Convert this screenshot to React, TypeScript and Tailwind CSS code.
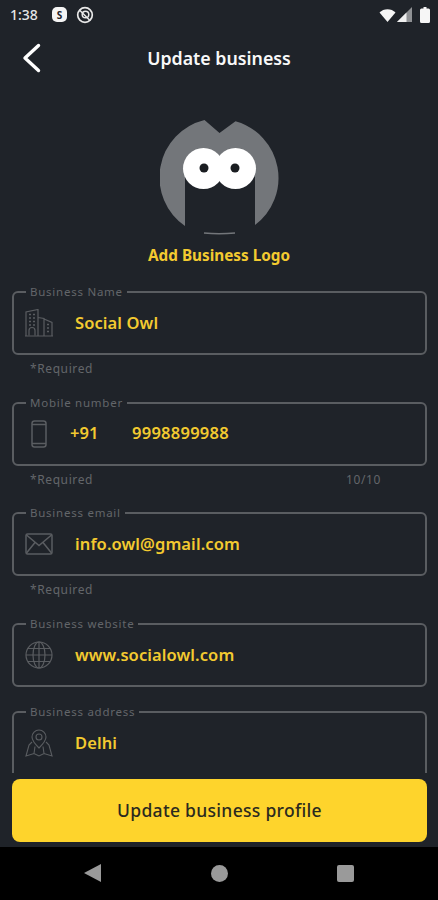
import React from "react";

const font = { fontFamily: '"Noto Sans", sans-serif' };

function Building() {
  return (
    <svg width="30" height="28" viewBox="0 0 30 28" fill="none" stroke="#5a5d61" strokeWidth="1.2">
      <path d="M1 27h28M2 26.500V3l12-2.500V26.500M14 8.500l6 1V26.500M20 10l8 3.500v13" />
      <path d="M5 5.500h2M9 5.500h2M5 9h2M9 9h2M5 12.500h2M9 12.500h2M5 16h2M9 16h2M23 15.500h2M23 19h2M23 22.500h2" strokeWidth="1.500" />
      <path d="M5 26.500v-5a3 3 0 0 1 6 0v5" />
    </svg>
  );
}

function Phone() {
  return (
    <svg width="16" height="28" viewBox="0 0 16 28" fill="none" stroke="#5a5d61" strokeWidth="1.500">
      <rect x="1" y="1" width="14" height="26" rx="2.500" />
      <path d="M1 4.500h14M1 23.500h14" />
    </svg>
  );
}

function Mail() {
  return (
    <svg width="28" height="22" viewBox="0 0 28 22" fill="none" stroke="#5a5d61" strokeWidth="1.500">
      <rect x="1" y="1" width="26" height="20" rx="1.500" />
      <path d="M1.500 2l12.500 10.500L26.500 2M1.500 20l8.500-10.500M26.500 20L18 9.500" />
    </svg>
  );
}

function Globe() {
  return (
    <svg width="28" height="28" viewBox="0 0 28 28" fill="none" stroke="#5a5d61" strokeWidth="1.200">
      <circle cx="14" cy="14" r="13" />
      <ellipse cx="14" cy="14" rx="6" ry="13" />
      <path d="M14 1v26M1 14h26M3 7.500h22M3 20.500h22" />
    </svg>
  );
}

function Pin() {
  return (
    <svg width="28" height="28" viewBox="0 0 28 28" fill="none" stroke="#5a5d61" strokeWidth="1.100">
      <path d="M14 19c-4-4-7-7-7-11a7 7 0 0 1 14 0c0 4-3 7-7 11z" />
      <circle cx="14" cy="8" r="3" />
      <path d="M7 13l-3 3-3 11 8-2.500 5 2.500 5-2.500 8 2.500-3-11-3-3M9 24.500l1-7M19 24.500l-1-7" />
    </svg>
  );
}

function Field({
  label,
  children,
  helper,
  counter,
  clipped,
}: {
  label: string;
  children: React.ReactNode;
  helper?: boolean;
  counter?: string;
  clipped?: boolean;
}) {
  return (
    <div>
      <fieldset className={clipped ? "h-[80px] rounded-md border-2 border-[#5a5d61] p-0" : "h-[70px] rounded-md border-2 border-[#5a5d61] p-0"}>
        <legend className="ml-3 px-1 text-[11.500px] leading-[14px] tracking-[0.75px] text-[#63666a]">{label}</legend>
        <div className="flex h-[48px] items-center">{children}</div>
      </fieldset>
      {helper ? (
        <div className="flex h-[40.670px] justify-between pl-[18px] pr-[46px] pt-[6px] text-[12px] leading-[16px] tracking-[0.6px] text-[#63666a]">
          <span>*Required</span>
          {counter ? <span>{counter}</span> : null}
        </div>
      ) : clipped ? null : (
        <div className="h-[18px]" />
      )}
    </div>
  );
}

function Row({ icon, text }: { icon: React.ReactNode; text: string }) {
  return (
    <>
      <div className="w-[61px] shrink-0 pl-[10px]">
        <div className="flex w-[30px] justify-center">{icon}</div>
      </div>
      <span className="text-[16.500px] font-semibold tracking-[0.1px] text-[#f3ca30]">{text}</span>
    </>
  );
}

export default function App() {
  return (
    <div style={font} className="flex h-[900px] w-[438px] flex-col overflow-hidden bg-[#1f2329]">
      {/* status bar */}
      <div className="flex h-7 shrink-0 items-center justify-between pl-[10px] pr-2 pt-[1px]">
        <div className="flex items-center text-white">
          <span className="w-[41px] text-[14px] font-medium text-[#e6e6e6]">1:38</span>
          <svg width="17" height="17" viewBox="0 0 17 17">
            <rect x="1" y="1" width="15" height="15" rx="5" fill="#f4f4f4" />
            <text x="8.500" y="12.500" textAnchor="middle" fontSize="10" fontWeight="700" fill="#1f2329">S</text>
          </svg>
          <svg className="ml-[8px]" width="18" height="18" viewBox="0 0 18 18" fill="none" stroke="#e8e8e8">
            <circle cx="9" cy="9" r="7.300" strokeWidth="1.700" />
            <circle cx="9.500" cy="8.500" r="3.300" strokeWidth="1.500" />
            <path d="M3.500 4l10.500 10.500" strokeWidth="1.500" />
          </svg>
        </div>
        <div className="flex items-center">
          <svg width="17" height="14" viewBox="0 0 17 14"><path d="M0.500 4.500C4.500 0 12.500 0 16.500 4.500L8.500 14z" fill="#f6f6f6" /></svg>
          <svg className="ml-[1px]" width="15" height="15" viewBox="0 0 15 15">
            <path d="M15 0V15H0z" fill="#8f9194" />
            <path d="M9.500 5.500V15H0z" fill="#f0f0f0" />
          </svg>
          <svg className="ml-[8px]" width="10" height="16" viewBox="0 0 10 16">
            <path d="M3.500 0h3v1.500H8.500a1.500 1.500 0 0 1 1.500 1.500v11.500a1.500 1.500 0 0 1-1.500 1.500h-7A1.500 1.500 0 0 1 0 14.500V3a1.500 1.500 0 0 1 1.500-1.500h2z" fill="#f6f6f6" />
          </svg>
        </div>
      </div>

      {/* header */}
      <div className="grid h-[60px] shrink-0 grid-cols-[1fr_auto_1fr] items-center">
        <div className="pl-[22px]">
          <svg width="20" height="30" viewBox="0 0 20 30" fill="none" stroke="#ffffff" strokeWidth="3.400" strokeLinecap="round" strokeLinejoin="round">
            <path d="M16.500 2.500L3 15l13.500 12.500" />
          </svg>
        </div>
        <div className="text-[17.800px] font-semibold text-[#f8f8f8]">Update business</div>
        <div />
      </div>

      {/* logo */}
      <div className="flex shrink-0 flex-col items-center pt-[30px]">
        <svg className="ml-[2px]" width="120" height="120" viewBox="0 0 120 120">
          <path d="M59.500 15L44.500 2A59 59 0 0 0 25 107.900V50H95V107.100A59 59 0 0 0 75.500 3.200Z" fill="#73767a" />
          <circle cx="43.500" cy="50.500" r="20.500" fill="#ffffff" />
          <circle cx="75.500" cy="50.500" r="20.500" fill="#ffffff" />
          <circle cx="44" cy="50" r="4.500" fill="#1a1d21" />
          <circle cx="75" cy="50" r="4.500" fill="#1a1d21" />
          <path d="M44 115q15 1.500 31 0" fill="none" stroke="#73767a" strokeWidth="1.500" />
        </svg>
        <div className="mt-[7px] text-[15.300px] font-bold leading-5 text-[#f3ca30]">Add Business Logo</div>
      </div>

      {/* form */}
      <div className="min-h-0 flex-1 overflow-hidden pl-3 pr-[11px] pt-5">
        <Field label="Business Name" helper>
          <Row icon={<Building />} text="Social Owl" />
        </Field>
        <Field label="Mobile number" helper counter="10/10">
          <div className="flex w-[56px] shrink-0 justify-center pr-[6px]"><Phone /></div>
          <span className="w-[62px] text-[16.500px] font-semibold text-[#f3ca30]">+91</span>
          <span className="text-[16.500px] font-semibold tracking-[0.25px] text-[#f3ca30]">9998899988</span>
        </Field>
        <Field label="Business email" helper>
          <Row icon={<Mail />} text="info.owl@gmail.com" />
        </Field>
        <Field label="Business website">
          <Row icon={<Globe />} text="www.socialowl.com" />
        </Field>
        <Field label="Business address" clipped>
          <Row icon={<Pin />} text="Delhi" />
        </Field>
      </div>

      {/* action */}
      <div className="shrink-0 pb-[5px] pl-3 pr-[11px] pt-[6px]">
        <button className="flex h-[63px] w-full items-center justify-center rounded-lg bg-[#fed42c] text-[17.500px] font-medium tracking-[0.3px] text-[#2b2a1f]">
          Update business profile
        </button>
      </div>

      {/* nav bar */}
      <div className="flex h-[53px] shrink-0 items-center bg-black pb-[1px] pl-[84px]">
        <svg width="17" height="18" viewBox="0 0 17 18"><path d="M17 0V18L0 9z" fill="#9a9a9a" /></svg>
        <div className="ml-[110px] h-[17px] w-[17px] rounded-full bg-[#9a9a9a]" />
        <div className="ml-[109px] h-[17px] w-[17px] rounded-[2px] bg-[#9a9a9a]" />
      </div>
    </div>
  );
}
